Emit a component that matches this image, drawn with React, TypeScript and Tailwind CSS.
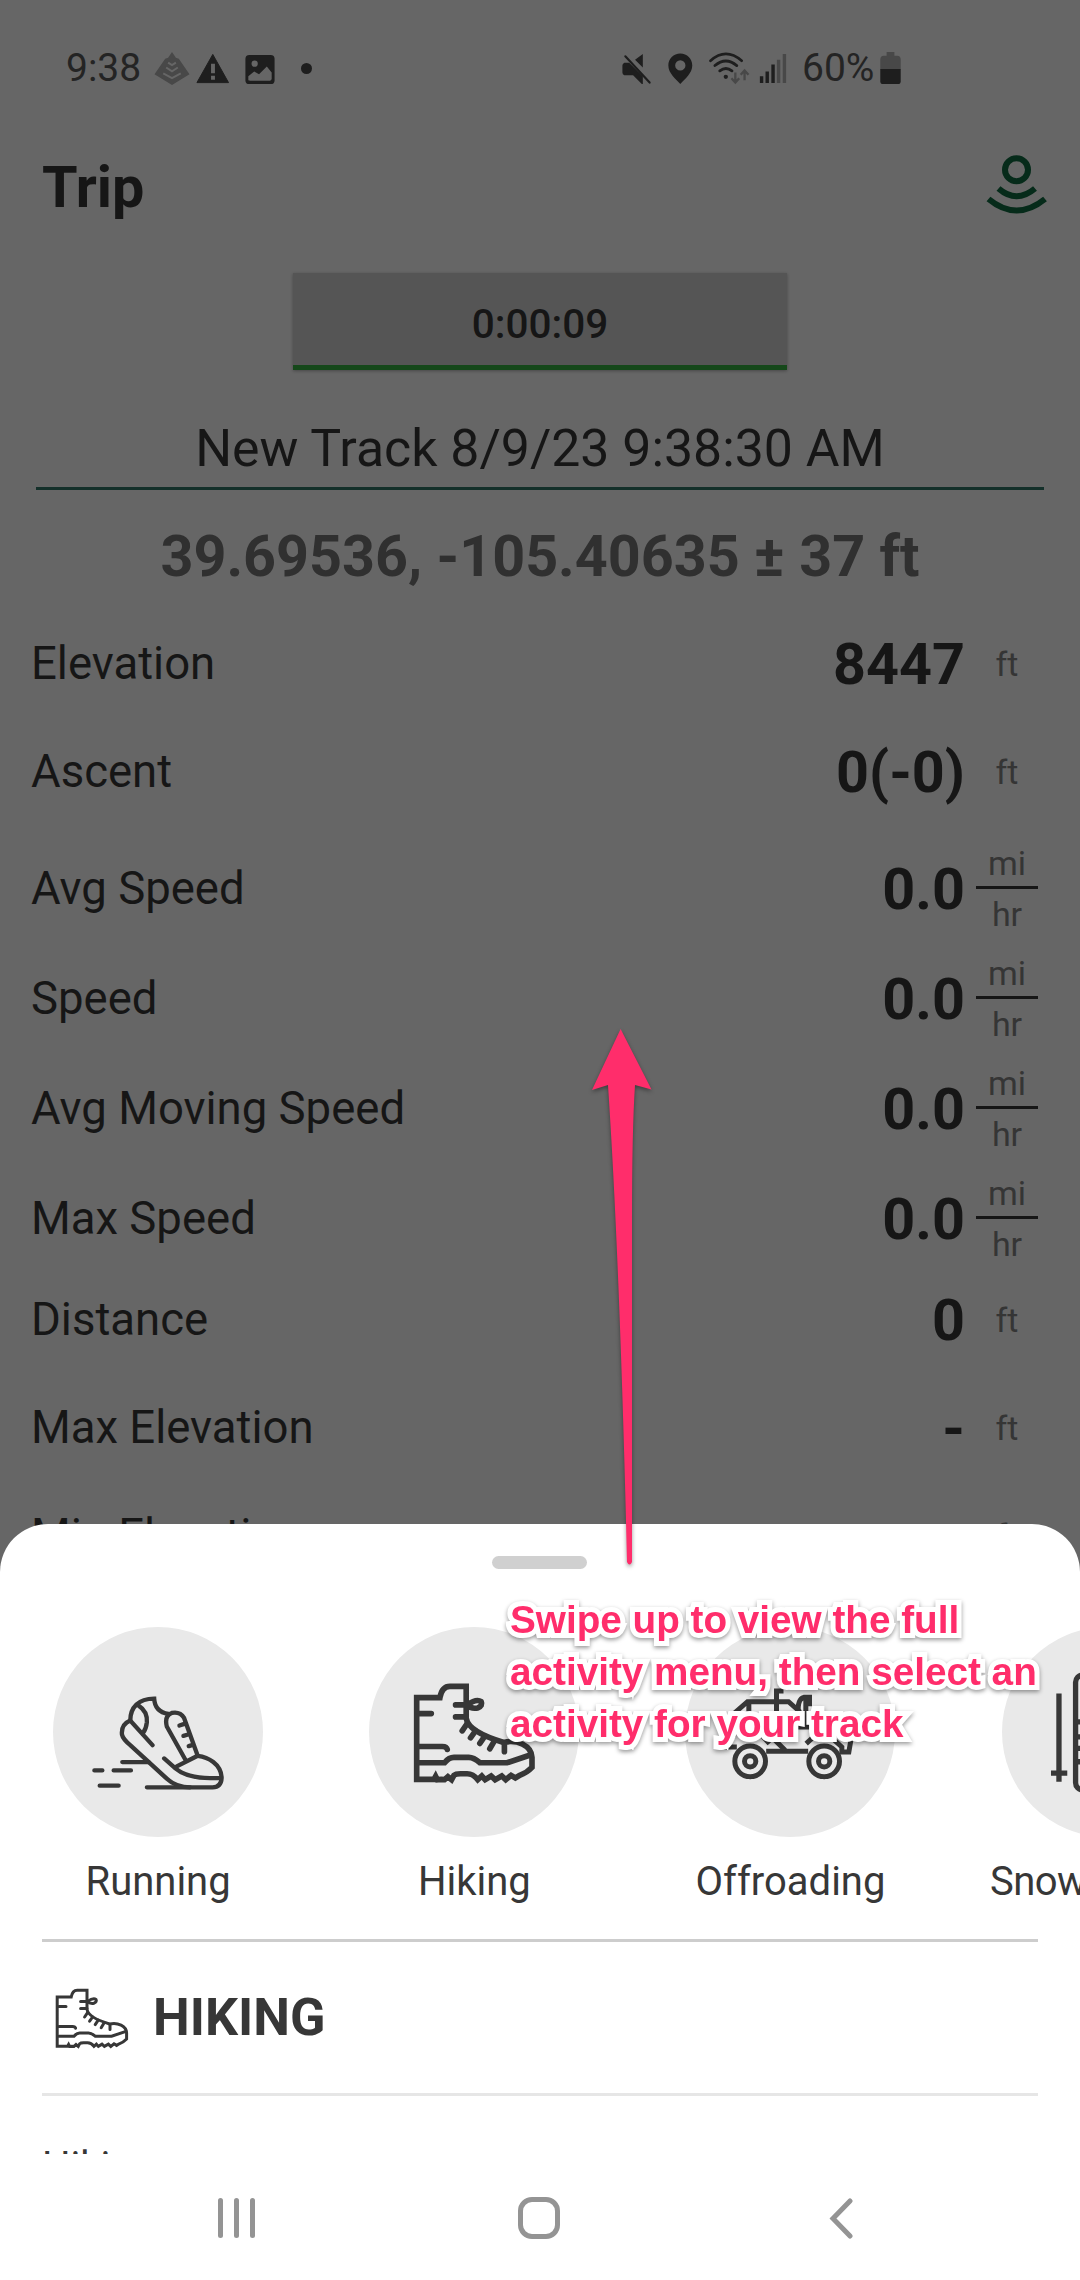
import type { ReactNode } from "react";
import clsx from "clsx";

type Stat = { label: string; value: string; unit: "ft" | "mi/hr" };

const stats: Stat[] = [
  { label: "Elevation", value: "8447", unit: "ft" },
  { label: "Ascent", value: "0(-0)", unit: "ft" },
  { label: "Avg Speed", value: "0.0", unit: "mi/hr" },
  { label: "Speed", value: "0.0", unit: "mi/hr" },
  { label: "Avg Moving Speed", value: "0.0", unit: "mi/hr" },
  { label: "Max Speed", value: "0.0", unit: "mi/hr" },
  { label: "Distance", value: "0", unit: "ft" },
  { label: "Max Elevation", value: "-", unit: "ft" },
  { label: "Min Elevation", value: "-", unit: "ft" },
];

function StatusBar() {
  return (
    <div className="flex h-[136px] shrink-0 items-center pl-[66px] text-[39px] text-[#242424]">
      <span className="w-[88px]">9:38</span>
      <svg className="h-[35px] w-9" viewBox="154 52 36 36" fill="#484848">
        <path d="M172 53l4 6 3 1 11 16-18 11-18-11 11-16 3-1z" />
        <path
          d="M168 64l4 2.500 4-2.500M166 69l6 4 6-4M163 75l9 5 9-5"
          fill="none"
          stroke="#666"
          strokeWidth="2"
        />
      </svg>
      <svg className="ml-[5px] h-[35px] w-[35px]" viewBox="195 52 35 36" fill="#1e1e1e">
        <path d="M212.800 55.500L229 84.500h-32.500z" stroke="#1e1e1e" strokeLinejoin="round" />
        <path d="M211 65h4v10h-4zM211 77.500h4v4h-4z" fill="#666" />
      </svg>
      <svg className="ml-3.5 h-[35px] w-8" viewBox="244 52 32 36" fill="#1e1e1e">
        <rect x="245" y="56" width="30" height="30" rx="4" />
        <circle cx="254.500" cy="65" r="3.200" fill="#666" />
        <path d="M248 82v-4l6-5 5 3 8-8 5 6v7l-1.500 1.500H250z" fill="#666" />
      </svg>
      <div className="ml-[25px] size-[11px] rounded-full bg-[#1e1e1e]" />

      <svg className="ml-[309px] h-[35px] w-[31px]" viewBox="621 52 31 36" fill="#1e1e1e">
        <path d="M643 55v14l-8-8zM624 64h5l14 14v8h-1l-9-9h-9q-2-1-2-3v-7q0-2 2-3z" />
        <path d="M625 57.500l25 27" stroke="#1e1e1e" strokeWidth="2.200" strokeLinecap="round" />
      </svg>
      <svg className="ml-[15px] h-[35px] w-[27px]" viewBox="667 52 27 36" fill="#1e1e1e">
        <path
          fillRule="evenodd"
          d="M680.300 54.500c-7 0-12.300 5.500-12.300 12.300 0 8 7.500 13.500 12.300 19.200 4.800-5.700 12.300-11.200 12.300-19.200 0-6.800-5.300-12.300-12.300-12.300zm0 7a5.300 5.300 0 1 1 0 10.600 5.300 5.300 0 0 1 0-10.600z"
        />
      </svg>
      <svg className="ml-3.5 h-[35px] w-[43px]" viewBox="708 52 43 36" fill="none">
        <g stroke="#1e1e1e" strokeWidth="2.800" strokeLinecap="round">
          <path d="M710 62q15.700-14 32 0M714.500 67q11.200-9.500 22.500 0M719.500 72.500q6.300-5 12.500 0" />
        </g>
        <circle cx="725.700" cy="78.500" r="2.200" fill="#1e1e1e" />
        <path
          d="M735.500 74v10m-4-4l4 4.500 4-4.500M745 82V72.500m-4 4l4-4.500 4 4.500"
          stroke="#484848"
          strokeWidth="2.400"
        />
      </svg>
      <svg className="ml-2 h-[35px] w-7" viewBox="759 52 28 36" fill="#1e1e1e">
        <path d="M759.500 78h3.500v7h-3.500zM765.300 73h3.500v12h-3.500zM771.300 66h3.500v19h-3.500z" />
        <path d="M777 61h3.500v24H777zM783 55h3.500v30H783z" fill="#484848" />
      </svg>
      <span className="ml-[15px] w-[78px]">60%</span>
      <svg className="h-[35px] w-[21px]" viewBox="880 52 21 36">
        <path d="M886.500 53h8v4h3q3.500 0 3.500 4v10h-21V61q0-4 3.500-4h3z" fill="#484848" />
        <path d="M880 70.500h21V83q0 3-3 3h-15q-3 0-3-3z" fill="#1e1e1e" />
      </svg>
    </div>
  );
}

function GpsIcon() {
  return (
    <svg className="mb-1 h-16 w-[64px]" viewBox="984 158 64 64" fill="none" stroke="#062b1a" strokeWidth="6">
      <circle cx="1016.500" cy="175.700" r="11.500" />
      <path d="M998.500 194.500q18 15.500 36.500 0M988.500 205q28 23 56.500 0" />
    </svg>
  );
}

function Unit({ unit }: { unit: Stat["unit"] }) {
  if (unit === "ft") {
    return <span className="w-[62px] text-center">ft</span>;
  }
  return (
    <div className="mb-[2px] flex w-[62px] flex-col text-center leading-[50px]">
      <span className="h-[49px] border-b-[3px] border-[#161616] leading-[46px]">mi</span>
      <span className="h-[49px]">hr</span>
    </div>
  );
}

function StatRow({ label, value, unit }: Stat) {
  return (
    <div
      className={clsx(
        "flex shrink-0 items-center pr-[42px] pl-[31px] text-[#161616]",
        unit === "ft" ? "h-[108px]" : "h-[110px] pt-[17px]"
      )}
    >
      <span className="grow text-[45.500px]">{label}</span>
      <span className="pt-[2px] pr-[11px] text-[57.500px] font-bold">{value}</span>
      <div className="flex text-[34px] text-[#353535]">
        <Unit unit={unit} />
      </div>
    </div>
  );
}

function ShoeIcon() {
  return (
    <svg
      className="mt-[21px] h-[98px] w-[137px]"
      viewBox="180 280 410 295"
      fill="none"
      stroke="#373737"
      strokeWidth="13"
      strokeLinecap="round"
    >
      <path d="M300 360C300 320 325 294 372 294Q374 334 415 340" />
      <path d="M367 434L300 360Q272 372 275 402Q278 416 300 434L410 535Q438 561 480 561H548Q575 560 575 530C572 490 535 470 503 466L462 352Q450 332 425 337Q402 345 410 378L466 478" />
      <path d="M503 466L440 498M402 474L436 504Q470 533 540 533H573" />
      <path d="M325 315Q352 332 350 365Q348 385 338 398" />
      <path d="M463 370L448 375M474 402L460 406M486 434L476 437" />
      <path d="M276 485H355M192 510H216M250 510H302M208 556H265M350 561H480" />
    </svg>
  );
}

function BootIcon({ className, strokeWidth = 17 }: { className: string; strokeWidth?: number }) {
  return (
    <svg
      className={className}
      viewBox="212 240 380 310"
      fill="none"
      stroke="#373737"
      strokeWidth={strokeWidth}
      strokeLinecap="round"
    >
      <path d="M228 536V290H298Q304 256 328 256H377V352C382 385 440 410 490 425C530 415 574 435 575 470V500Q560 516 538 524L525 532L512 524L496 537L484 526L464 537L452 526L434 537L424 526L412 537Q398 519 380 519H360Q345 519 340 524L333 537L322 528L312 537L302 536L290 537L285 527L280 536Z" />
      <path d="M345 312H377Q392 325 412 321Q428 314 422 302Q408 292 380 312M345 348H377" />
      <path d="M236 338H272M236 437H305Q318 437 320 446" />
      <path d="M380 368L365 390M405 390L390 411M433 406L418 428M462 420L448 444M492 428V453" />
      <path d="M236 486H312Q325 470 340 470H385Q400 470 418 486H500L572 462" />
    </svg>
  );
}

function JeepIcon() {
  return (
    <svg
      className="mt-[5px] mr-1 h-[95px] w-[137px]"
      viewBox="180 260 410 285"
      fill="none"
      stroke="#373737"
      strokeWidth="15"
    >
      <circle cx="270" cy="483" r="46" />
      <circle cx="270" cy="483" r="17" />
      <circle cx="492" cy="483" r="46" />
      <circle cx="492" cy="483" r="17" />
      <path d="M318 453H444M215 345L262 304H385L420 335M266 304V370M349 375V272H370" />
      <path d="M437 380V291H448V318M437 291Q414 290 414 328M400 380H520L560 395" />
      <path d="M192 440H230M204 435L235 375M260 405H305L328 430M340 415L375 450M438 430L462 408H510L545 440V455H566L572 420" />
    </svg>
  );
}

function SnowshoeIcon() {
  return (
    <svg
      className="mt-[3px] h-[123px] w-[117px]"
      viewBox="1165 215 350 370"
      fill="none"
      stroke="#373737"
      strokeWidth="16"
    >
      <path d="M1197 280V545M1173 519H1222M1483 280V545M1458 519H1507" />
      <rect x="1247" y="224" width="84" height="346" rx="22" />
      <rect x="1349" y="224" width="84" height="346" rx="22" />
      <path d="M1247 365H1331M1247 410H1331M1247 445H1331M1247 485H1331M1349 365H1433M1349 410H1433M1349 445H1433M1349 485H1433" />
    </svg>
  );
}

function Activity({ name, children }: { name: string; children: ReactNode }) {
  return (
    <div className="flex w-[316.200px] shrink-0 flex-col items-center">
      <div className="flex size-[210px] shrink-0 items-center justify-center rounded-full bg-[#e9e9e9]">
        {children}
      </div>
      <span className="mt-[21px] text-[40px] leading-[48px] whitespace-nowrap">{name}</span>
    </div>
  );
}

function ActivitySheet() {
  return (
    <div className="absolute inset-x-0 top-[1524px] flex h-[756px] flex-col rounded-t-[48px] bg-white text-[#373737]">
      <div className="mt-8 mr-[2px] h-[13px] w-[95px] shrink-0 self-center rounded-full bg-[#d0d0d0]" />
      <div className="mt-[58px] flex shrink-0 overflow-hidden">
        <Activity name="Running">
          <ShoeIcon />
        </Activity>
        <Activity name="Hiking">
          <BootIcon className="h-[103px] w-[127px]" />
        </Activity>
        <Activity name="Offroading">
          <JeepIcon />
        </Activity>
        <div className="tracking-[-0.6px]">
          <Activity name="Snowshoeing">
            <SnowshoeIcon />
          </Activity>
        </div>
      </div>
      <div className="mx-[42px] mt-[33px] flex h-[157px] shrink-0 items-center border-t-[3px] border-b-[3px] border-t-[#cdcdcd] border-b-[#e6e6e6] pl-3">
        <BootIcon className="h-[62px] w-[76px]" strokeWidth={15} />
        <span className="pl-[23px] text-[52px] font-bold">HIKING</span>
      </div>
      <div className="mx-[42px] h-[58px] shrink-0 overflow-hidden pt-[41px] text-[40px] leading-[60px]">
        Hiking
      </div>
      <div className="flex h-[126px] items-center pt-[2px] pl-[218px]">
        <div className="flex h-10 w-[37px] justify-between">
          <div className="w-[5px] rounded-full bg-[#949494]" />
          <div className="w-[5px] rounded-full bg-[#949494]" />
          <div className="w-[5px] rounded-full bg-[#949494]" />
        </div>
        <div className="ml-[263px] size-[42px] rounded-[14px] border-[5px] border-[#949494]" />
        <svg className="ml-[269px] h-[41px] w-6" viewBox="0 0 24 41" fill="none" stroke="#949494" strokeWidth="5">
          <path d="M21 3L4 20.500L21 38" strokeLinecap="round" />
        </svg>
      </div>
    </div>
  );
}

function SwipeHint() {
  return (
    <>
      <svg
        className="absolute top-[1020px] left-[585px] h-[555px] w-[75px] drop-shadow-[0_2px_2px_rgba(0,0,0,0.4)]"
        viewBox="585 1020 75 555"
        fill="#ff2d6b"
      >
        <path d="M620.600 1029L651.500 1089.500L635 1085Q632 1130 632 1220V1562Q629.500 1567 627 1562Q620 1265 608 1085L592 1090Z" />
      </svg>
      <p className="absolute top-[1594px] left-[510px] font-['Liberation_Sans',sans-serif] text-[38.700px] leading-[52px] font-bold whitespace-nowrap text-[#ff2d6b] drop-shadow-[0_2px_2px_rgba(0,0,0,0.4)] [-webkit-text-stroke:10px_white] [paint-order:stroke_fill] [stroke-linejoin:round]">
        Swipe up to view the full
        <br />
        activity menu, then select an
        <br />
        activity for your track
      </p>
    </>
  );
}

export default function App() {
  return (
    <div className="relative flex h-[2280px] w-[1080px] flex-col overflow-hidden bg-[#666] font-[Roboto,sans-serif]">
      <StatusBar />
      <div className="flex h-[100px] shrink-0 items-center justify-between pr-8 pl-[42px]">
        <h1 className="pt-[5px] text-[57.500px] font-bold text-[#161616]">Trip</h1>
        <GpsIcon />
      </div>
      <div className="mt-[37px] flex h-[97px] w-[494px] shrink-0 items-center justify-center self-center border-b-[5px] border-[#15481a] bg-[#555] pt-2.5 text-[40.500px] font-medium text-[#161616] shadow-[0_1px_3px_rgba(0,0,0,0.3)]">
        0:00:09
      </div>
      <div className="mx-9 mt-[38px] flex h-[82px] shrink-0 items-center justify-center border-b-[3px] border-[#14302a] pt-[2px] text-[51.800px] text-[#161616]">
        New Track 8/9/23 9:38:30 AM
      </div>
      <div className="flex h-[120px] shrink-0 items-center justify-center pt-3.5 text-[57.500px] font-bold text-[#303030]">
        39.69536, -105.40635 ± 37 ft
      </div>
      {stats.map((stat) => (
        <StatRow key={stat.label} {...stat} />
      ))}
      <ActivitySheet />
      <SwipeHint />
    </div>
  );
}
